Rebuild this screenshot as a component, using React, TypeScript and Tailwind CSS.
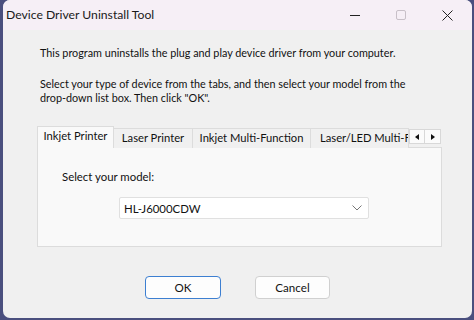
import React from "react";

const font = { fontFamily: 'Lato, "Liberation Sans", sans-serif' };

export default function App() {
  return (
    <div className="w-[474px] h-[320px] bg-[#4a4f7e] flex overflow-hidden" style={font}>
      <div className="ml-[3px] mr-[2px] mb-[2px] flex-1 rounded-[7px] overflow-hidden bg-[#f0f0f0] flex flex-col">
        {/* Title bar */}
        <div className="h-[30px] bg-[#f6eff6] flex items-center shrink-0">
          <div className="pl-[3px] text-[12.2px] text-[#1a1a1a] flex-1 leading-none whitespace-nowrap">Device Driver Uninstall Tool</div>
          <div className="w-[46px] h-full flex items-center justify-center">
            <div className="w-[10px] h-[1px] bg-[#222]" />
          </div>
          <div className="w-[46px] h-full flex items-center justify-center">
            <div className="w-[10px] h-[10px] border border-[#c8c0c8] rounded-[2px]" />
          </div>
          <div className="w-[46px] h-full flex items-center justify-center mr-[2px]">
            <svg width="11" height="11" viewBox="0 0 11 11">
              <path d="M0.5 0.5 L10.5 10.5 M10.5 0.5 L0.5 10.5" stroke="#222" strokeWidth="1" />
            </svg>
          </div>
        </div>
        {/* Body */}
        <div className="flex-1 flex flex-col text-[10.8px] text-[#111] pl-[34px] pr-[28px] whitespace-nowrap">
          <p className="mt-[15px] pl-[3px] leading-[15px]">
            This program uninstalls the plug and play device driver from your computer.
          </p>
          <p className="mt-[17px] pl-[3px] leading-[14px]">
            Select your type of device from the tabs, and then select your model from the
            <br />
            drop-down list box. Then click "OK".
          </p>
          {/* Tabs */}
          <div className="mt-[21px] flex items-end h-[22px] relative z-10 text-[11.2px]">
            <div className="h-[22px] w-[77px] bg-[#f9f9f9] border border-[#dcdcdc] border-b-0 flex items-center justify-center pb-[3px]">
              Inkjet Printer
            </div>
            <div className="h-[20px] w-[79px] bg-[#f0f0f0] border border-[#dcdcdc] border-l-0 border-b-0 flex items-center justify-center">
              Laser Printer
            </div>
            <div className="h-[20px] w-[118px] bg-[#f0f0f0] border border-[#dcdcdc] border-l-0 border-b-0 flex items-center justify-center">
              Inkjet Multi-Function
            </div>
            <div className="h-[20px] w-[98px] bg-[#f0f0f0] border border-[#dcdcdc] border-l-0 border-b-0 flex items-center pl-[9px] overflow-hidden">
              Laser/LED Multi-F
            </div>
            <div className="h-[15px] mb-[4px] flex self-end">
              <div className="w-[16px] h-[15px] bg-[#fbfbfb] border border-[#d8d8d8] flex items-center justify-center">
                <svg width="4" height="6" viewBox="0 0 4 6"><path d="M4 0 L0 3 L4 6 Z" fill="#111" /></svg>
              </div>
              <div className="w-[16px] h-[15px] bg-[#fbfbfb] border border-[#d8d8d8] border-l-0 flex items-center justify-center">
                <svg width="4" height="6" viewBox="0 0 4 6"><path d="M0 0 L4 3 L0 6 Z" fill="#111" /></svg>
              </div>
            </div>
          </div>
          <div className="w-[405px] h-[100px] bg-[#f9f9f9] border border-[#dcdcdc] -mt-[1px] flex flex-col text-[11.4px]">
            <div className="mt-[20px] ml-[24px]">Select your model:</div>
            <div className="mt-[12px] ml-[81px] w-[250px] h-[22px] bg-white border border-[#e0e0e0] rounded-[2px] flex items-center justify-between pl-[4px] pr-[6px]">
              <span>HL-J6000CDW</span>
              <svg width="10" height="6" viewBox="0 0 10 6">
                <path d="M0.5 0.5 L5 5 L9.5 0.5" stroke="#777" strokeWidth="1" fill="none" />
              </svg>
            </div>
          </div>
          {/* Buttons */}
          <div className="mt-[29px] flex gap-[34px] pl-[108px] text-[11.6px]">
            <div className="w-[76px] h-[23px] bg-[#fdfdfd] border border-[#3d7fd1] rounded-[4px] flex items-center justify-center">
              OK
            </div>
            <div className="w-[75px] h-[23px] bg-[#fdfdfd] border border-[#d0d0d0] rounded-[4px] flex items-center justify-center">
              Cancel
            </div>
          </div>
        </div>
      </div>
    </div>
  );
}
